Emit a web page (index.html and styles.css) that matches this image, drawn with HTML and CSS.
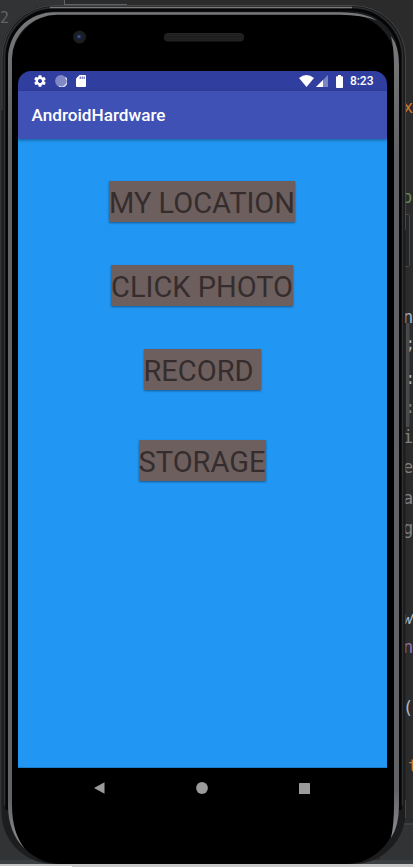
FILE: index.html
```html
<!DOCTYPE html>
<html lang="en">
<head>
<meta charset="utf-8">
<title>AndroidHardware</title>
<link rel="stylesheet" href="styles.css">
</head>
<body>
<div class="desktop">
  <svg class="backdrop" width="413" height="867" viewBox="0 0 413 867" aria-hidden="true">
    <defs>
      <linearGradient id="side" x1="0" y1="0" x2="0" y2="1">
        <stop offset="0" stop-color="#77797b"/>
        <stop offset=".15" stop-color="#606164"/>
        <stop offset=".94" stop-color="#626366"/>
        <stop offset="1" stop-color="#8b8d90"/>
      </linearGradient>
    </defs>
    <!-- editor window -->
    <rect width="413" height="867" fill="#2b2b2b"/>
    <rect width="65" height="867" fill="#313335"/>
    <path d="M64.500 0V5M64 4.500H127" stroke="#606366" fill="none"/>
    <rect y="823" x="380" width="33" height="37" fill="#313335"/>
    <rect y="823" x="380" width="33" height="2" fill="#3c3f41"/>
    <rect y="860" width="413" height="4" fill="#3c3f41"/>
    <rect y="864" width="413" height="3" fill="#c8c8c8"/>
    <rect y="866" width="72" height="1" fill="#fff"/>
    <g class="code">
      <text x="0" y="23" fill="#606366" font-size="15">2</text>
      <text x="403" y="113" fill="#cc7832">x</text>
      <text x="402" y="203" fill="#6a8759">p</text>
      <text x="403" y="323" fill="#a9b7c6">n</text>
      <text x="405" y="350" fill="#a9b7c6">;</text>
      <text x="405" y="384" fill="#a9b7c6">:</text>
      <text x="405" y="413" fill="#808080">:</text>
      <text x="403" y="443" fill="#808080">i</text>
      <text x="403" y="473" fill="#808080">e</text>
      <text x="403" y="504" fill="#808080">a</text>
      <text x="403" y="534" fill="#808080">g</text>
      <text x="403" y="624" fill="#a9b7c6" font-style="italic">w</text>
      <text x="403" y="653" fill="#9876aa">n</text>
      <text x="403" y="714" fill="#a9b7c6">(</text>
      <text x="408" y="772" fill="#cc7832">t</text>
    </g>
    <!-- side buttons -->
    <rect x="404" y="214.500" width="5.500" height="52" rx="1" fill="#252627" stroke="#4a4b4c"/>
    <rect x="406" y="323" width="3.500" height="104" rx="1" fill="#48494b"/>
    <!-- device body -->
    <rect x="1.500" y="5" width="404" height="859" rx="52" fill="#1c1d1e"/>
    <path d="M2 110V57A52 52 0 0 1 54 5.500H353A52 52 0 0 1 405.500 57V230M405.500 800V818" fill="none" stroke="#434547"/>
    <path d="M4.500 805V58A50 50 0 0 1 54.500 7.500H352A50 50 0 0 1 402.500 58V805" fill="none" stroke="#303233" stroke-width="1.200"/>
    <path d="M7 810V58A48 48 0 0 1 55 10H352A48 48 0 0 1 400 58V810" fill="none" stroke="#060606" stroke-width="3"/>
    <path d="M50 7.500H352" fill="none" stroke="#77797b" stroke-width="1.300"/>
    <rect x="11" y="14" width="385" height="850" rx="50" fill="#000"/>
    <path d="M8 805V59A46.500 46.500 0 0 1 55 12.200H340Q366 12.500 377 20.500Q362 15 340 14.800H57A45 44 0 0 0 12 59V805Q12 833 25 849Q8 833 8 805Z" fill="url(#side)"/>
    <path d="M391 36Q399 46 399 65V805Q399 826 391 838Q394 824 394 805V67Q394 48 391 36Z" fill="url(#side)"/>
    <!-- camera and speaker -->
    <circle cx="79.500" cy="37" r="6.500" fill="#1d1d1f"/>
    <circle cx="79.500" cy="37" r="3.800" fill="#172034"/>
    <circle cx="79" cy="36.500" r="1.600" fill="#41517c"/>
    <rect x="164.500" y="33.500" width="79" height="7.500" rx="3" fill="#1e1e1e" stroke="#242424"/>
    <path d="M167 35.500H241M168 38.500H242" stroke="#292929" stroke-dasharray="1 1"/>
  </svg>

  <main class="screen">
    <header class="status">
      <div class="status-left">
        <svg width="14" height="14" viewBox="0 0 24 24" fill="#fff"><path d="M19.430 12.980c.040-.320.070-.640.070-.980s-.030-.660-.070-.980l2.110-1.650c.190-.150.240-.420.120-.640l-2-3.460c-.120-.220-.390-.300-.610-.220l-2.490 1c-.520-.400-1.080-.730-1.690-.980l-.380-2.650C14.460 2.180 14.250 2 14 2h-4c-.250 0-.460.180-.490.420l-.380 2.650c-.610.250-1.170.590-1.690.980l-2.490-1c-.230-.090-.490 0-.610.220l-2 3.460c-.130.220-.070.490.120.640l2.110 1.650c-.040.320-.070.650-.070.980s.030.660.070.980l-2.110 1.650c-.190.150-.240.420-.120.640l2 3.460c.120.220.390.300.610.220l2.490-1c.520.400 1.080.730 1.690.980l.380 2.650c.030.240.240.420.490.420h4c.250 0 .460-.180.490-.420l.380-2.650c.610-.250 1.170-.590 1.690-.980l2.490 1c.230.090.490 0 .610-.220l2-3.460c.120-.220.070-.490-.120-.640l-2.110-1.650zM12 15.500c-1.930 0-3.500-1.570-3.500-3.500s1.570-3.500 3.500-3.500 3.500 1.570 3.500 3.500-1.570 3.500-3.500 3.500z"/></svg>
        <svg width="12" height="12" viewBox="0 0 12 12"><circle cx="6" cy="6" r="5.900" fill="#8188c6"/><path d="M10.500 2.500A5.500 5.500 0 0 1 4 11.200" fill="none" stroke="#dfe1f3" stroke-width="1.200"/></svg>
        <svg class="card" width="10" height="12" viewBox="0 0 10 12"><path d="M3.500 0H9Q10 0 10 1V11Q10 12 9 12H1Q0 12 0 11V3.500Z" fill="#fff"/><path d="M4.200 1.500V4M6.200 1.500V4M8.200 1.500V4" stroke="#5962b3" stroke-width="1.100"/></svg>
      </div>
      <div class="status-right">
        <svg width="15" height="12" viewBox="0 0 15 12"><path d="M7.500 12L0 3Q7.500-3 15 3Z" fill="#fff"/></svg>
        <svg class="signal" width="12" height="12" viewBox="0 0 12 12"><path d="M0 12L12 0V12Z" fill="#7d84c4"/><path d="M0 12L7 5V12Z" fill="#fff"/></svg>
        <svg class="battery" width="7" height="13" viewBox="0 0 7 13"><path d="M2 0H5V1.300H6.200Q7 1.300 7 2.100V12.200Q7 13 6.200 13H.8Q0 13 0 12.200V2.100Q0 1.300 .8 1.300H2Z" fill="#fff"/></svg>
        <span class="clock">8:23</span>
      </div>
    </header>
    <div class="appbar"><h1>AndroidHardware</h1></div>
    <section class="content">
      <button class="location">MY LOCATION</button>
      <button class="photo">CLICK PHOTO</button>
      <button class="record">RECORD</button>
      <button class="storage">STORAGE</button>
    </section>
    <nav class="navbar">
      <svg width="11" height="12" viewBox="0 0 11 12"><path d="M0 6L10.500 .2V11.800Z" fill="#9b9b9b"/></svg>
      <svg width="12" height="12" viewBox="0 0 12 12"><circle cx="6" cy="6" r="5.900" fill="#9b9b9b"/></svg>
      <svg width="11" height="11" viewBox="0 0 11 11"><rect width="11" height="11" rx=".6" fill="#9b9b9b"/></svg>
    </nav>
  </main>
</div>
</body>
</html>
```
FILE: styles.css
```css
* { box-sizing: border-box; }
body { margin: 0; font-family: Roboto, sans-serif; }
.desktop {
  position: relative;
  width: 413px;
  height: 867px;
  padding: 71px 26px 0 18px;
  overflow: hidden;
  background: #2b2b2b;
}
.backdrop { position: absolute; top: 0; left: 0; }
.code { font: 17px "DejaVu Sans Mono", monospace; }
.screen {
  position: relative;
  width: 369px;
  height: 738px;
  display: flex;
  flex-direction: column;
  border-radius: 13px;
  overflow: hidden;
  background: #000;
}
.status {
  height: 20px;
  flex: none;
  display: flex;
  justify-content: space-between;
  align-items: center;
  padding: 0 13.500px 0 15px;
  background: #303f9f;
}
.status svg { display: block; }
.status-left { display: flex; align-items: center; gap: 8px; }
.card { margin-left: 1px; }
.status-right { display: flex; align-items: center; }
.signal { margin-left: 2px; }
.battery { margin-left: 8px; }
.clock { margin-left: 7px; font-size: 12px; font-weight: 500; line-height: 20px; color: #fff; }
.appbar {
  position: relative;
  height: 48px;
  flex: none;
  display: flex;
  align-items: center;
  padding: 0 0 0 13.500px;
  background: #3f51b5;
  box-shadow: 0 1px 3px rgba(0, 0, 0, .4);
}
.appbar h1 { margin: 0; font-size: 17.150px; font-weight: 500; line-height: 24px; color: #fff; }
.content {
  flex: 1;
  display: flex;
  flex-direction: column;
  align-items: center;
  padding: 42.400px 1px 0 0;
  background: #2196f3;
  border-bottom: 1px solid #1b7cc9;
}
button {
  height: 41px;
  margin: 0 0 42.800px;
  padding: 3px 0 0;
  border: 0;
  background: #6d5f5e;
  color: #352d2d;
  font: 29px/38px Roboto, sans-serif;
  text-align: left;
  white-space: nowrap;
  box-shadow: 0 1px 2px rgba(0, 0, 0, .4);
}
.location { width: 186px; }
.photo { width: 182px; }
.record { width: 117px; margin-bottom: 50px; }
.storage { width: 127px; margin-bottom: 0; }
.navbar {
  height: 41px;
  flex: none;
  display: flex;
  justify-content: space-between;
  align-items: center;
  padding: 0 77px 1px 76px;
}
```
